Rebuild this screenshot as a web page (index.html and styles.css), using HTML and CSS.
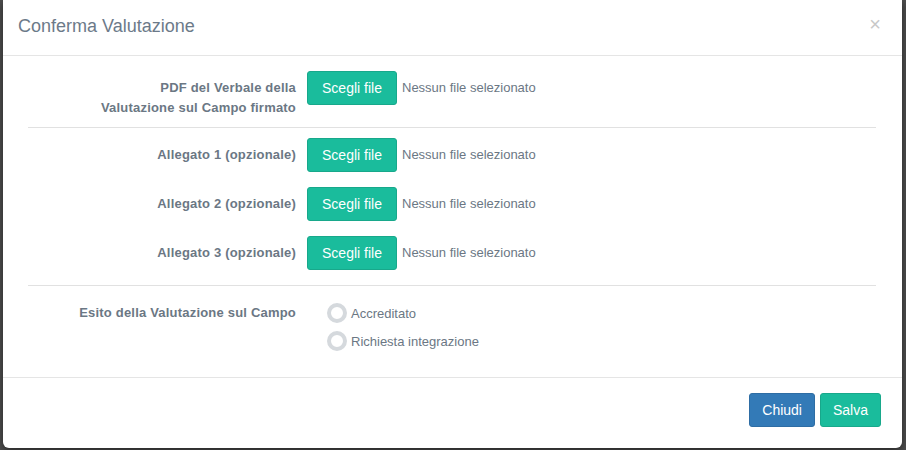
FILE: index.html
```html
<!DOCTYPE html>
<html>

<head>
    <title>Conferma Valutazione</title>
    <link rel="stylesheet" href="styles.css">
</head>

<body>
    <div class="modal">
        <div class="modal-header">
            <h4 class="modal-title">Conferma Valutazione</h4>
            <span class="close">&times;</span>
        </div>
        <div class="modal-body">
            <div class="form-group first">
                <label class="control-label">PDF del Verbale della Valutazione sul Campo firmato</label>
                <div class="file-input">
                    <span class="file-btn">Scegli file</span>
                    <span class="file-name">Nessun file selezionato</span>
                </div>
            </div>
            <hr>
            <div class="form-group">
                <label class="control-label">Allegato 1 (opzionale)</label>
                <div class="file-input">
                    <span class="file-btn">Scegli file</span>
                    <span class="file-name">Nessun file selezionato</span>
                </div>
            </div>
            <div class="form-group">
                <label class="control-label">Allegato 2 (opzionale)</label>
                <div class="file-input">
                    <span class="file-btn">Scegli file</span>
                    <span class="file-name">Nessun file selezionato</span>
                </div>
            </div>
            <div class="form-group">
                <label class="control-label">Allegato 3 (opzionale)</label>
                <div class="file-input">
                    <span class="file-btn">Scegli file</span>
                    <span class="file-name">Nessun file selezionato</span>
                </div>
            </div>
            <hr>
            <div class="form-group last">
                <label class="control-label">Esito della Valutazione sul Campo</label>
                <div class="radio-list">
                    <div class="radio"><span class="radio-circle"></span>Accreditato</div>
                    <div class="radio"><span class="radio-circle"></span>Richiesta integrazione</div>
                </div>
            </div>
        </div>
        <div class="modal-footer">
            <button type="button" class="btn btn-primary">Chiudi</button>
            <button type="button" class="btn btn-success">Salva</button>
        </div>
    </div>
</body>

</html>
```

FILE: styles.css
```css
* {
    box-sizing: border-box;
}

body {
    margin: 0;
    height: 450px;
    overflow: hidden;
    font-family: "Liberation Sans", Arial, sans-serif;
    background-color: #4e4e4e;
}

.modal {
    width: 899px;
    margin-left: 3px;
    background-color: #ffffff;
    border-radius: 0 0 6px 6px;
    box-shadow: 0 3px 9px rgba(0, 0, 0, 0.5);
}

.modal-header {
    display: flex;
    justify-content: space-between;
    align-items: center;
    height: 56px;
    padding: 0 21px 2px 15px;
    border-bottom: 1px solid #e5e5e5;
}

.modal-title {
    margin: 0;
    font-size: 18px;
    font-weight: normal;
    color: #6c7a89;
}

.close {
    font-size: 20px;
    color: #c8c8c8;
    margin-top: -4px;
}

.modal-body {
    padding: 15px 26px 22px 25px;
}

.form-group {
    display: grid;
    grid-template-columns: 268px 1fr;
    column-gap: 11px;
    margin-bottom: 15px;
}

.form-group.first {
    margin-bottom: 9px;
}

.form-group.last {
    margin-bottom: 0;
}

.control-label {
    padding-top: 7px;
    text-align: right;
    font-size: 13px;
    font-weight: bold;
    line-height: 20px;
    letter-spacing: 0.2px;
    color: #6b7784;
}

.form-group.first .control-label {
    padding-left: 60px;
}

.file-input {
    display: flex;
    align-items: flex-start;
}

.file-btn {
    display: inline-block;
    width: 90px;
    height: 34px;
    line-height: 32px;
    text-align: center;
    font-size: 14px;
    color: #ffffff;
    background-color: #1abc9c;
    border: 1px solid #18a88b;
    border-radius: 3px;
}

.file-name {
    margin-left: 5px;
    line-height: 34px;
    font-size: 13px;
    color: #6b7784;
}

hr {
    margin: 0 0 10px;
    border: 0;
    border-top: 1px solid #e1e1e1;
}

.radio-list {
    padding: 3px 0 0 20px;
}

.radio {
    display: flex;
    align-items: center;
    height: 28px;
    font-size: 13px;
    color: #6b7784;
}

.radio-circle {
    width: 20px;
    height: 20px;
    margin-right: 4px;
    border: 4px solid #d5d9dd;
    border-radius: 50%;
}

.modal-footer {
    display: flex;
    justify-content: flex-end;
    gap: 5px;
    padding: 15px 21px 21px;
    border-top: 1px solid #e5e5e5;
}

.btn {
    height: 34px;
    padding: 0 12px;
    font-family: "Liberation Sans", Arial, sans-serif;
    font-size: 14px;
    color: #ffffff;
    border-radius: 3px;
    cursor: pointer;
}

.btn-primary {
    background-color: #337ab7;
    border: 1px solid #2e6da4;
}

.btn-success {
    background-color: #1abc9c;
    border: 1px solid #18a88b;
}
```
